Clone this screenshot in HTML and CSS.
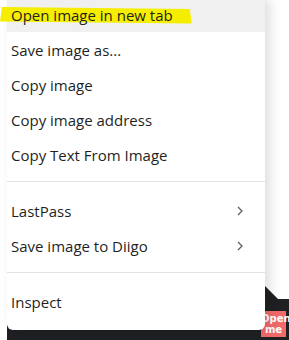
FILE: index.html
```html
<!DOCTYPE html>
<html lang="en">
<head>
    <meta charset="UTF-8">
    <meta name="viewport" content="width=device-width, initial-scale=1.0">
    <title>Context menu</title>
    <link rel="stylesheet" href="styles.css">
</head>
<body>
    <div class="page">
        <div class="page-body"></div>
        <div class="dock">
            <span class="badge">Open<br>me</span>
        </div>
    </div>

    <ul class="context-menu">
        <li class="menu-item is-hover"><span class="marker">Open image in new tab</span></li>
        <li class="menu-item">Save image as...</li>
        <li class="menu-item">Copy image</li>
        <li class="menu-item">Copy image address</li>
        <li class="menu-item">Copy Text From Image</li>
        <li class="menu-sep"></li>
        <li class="menu-item">LastPass
            <svg class="chevron" width="8" height="12" viewBox="0 0 8 12"><polyline points="2,2 6,6 2,10" /></svg>
        </li>
        <li class="menu-item">Save image to Diigo
            <svg class="chevron" width="8" height="12" viewBox="0 0 8 12"><polyline points="2,2 6,6 2,10" /></svg>
        </li>
        <li class="menu-sep"></li>
        <li class="menu-item">Inspect</li>
    </ul>
</body>
</html>
```

FILE: styles.css
```css
/* --- page behind the menu --- */
body {
    margin: 0;
    height: 340px;
    overflow: hidden;
    background: #fff;
    font-family: "Open Sans", "Noto Sans", Arial, sans-serif;
    color: #1f1f1f;
    display: flex;
    flex-direction: column;
}

.page {
    flex: 1;
    display: flex;
    flex-direction: column;
    padding-left: 7px;
}

.page-body {
    flex: 1;
}

.dock {
    position: relative;
    height: 41px;
    box-sizing: border-box;
    background: #1f2023;
    display: flex;
    justify-content: flex-end;
    align-items: flex-start;
    padding: 12px 3px 0 0;
}
.dock::before {
    content: "";
    position: absolute;
    left: 258px;
    top: -13px;
    width: 13px;
    height: 13px;
    background: #1f2023;
    clip-path: polygon(0 0, 0 100%, 100% 100%);
}

.badge {
    width: 25px;
    height: 26px;
    background: #f26a6a;
    color: #fff;
    font-family: "DejaVu Sans", Arial, sans-serif;
    font-weight: bold;
    font-size: 10px;
    line-height: 11px;
    text-align: center;
    padding-top: 2px;
    box-sizing: border-box;
}

/* --- context menu --- */
.context-menu {
    position: absolute;
    top: -3px;
    left: 7px;
    width: 258px;
    margin: 0;
    padding: 0 0 11px;
    list-style: none;
    background: #fff;
    border-radius: 0 0 6px 6px;
    box-shadow: 5px 2px 12px rgba(0, 0, 0, 0.13);
    font-size: 15px;
}

.menu-item {
    height: 35px;
    display: flex;
    align-items: center;
    justify-content: space-between;
    padding: 0 21px 0 4px;
}
.menu-item.is-hover {
    background: #f0f0f0;
}

.menu-sep {
    height: 1px;
    background: #e3e3e3;
    margin: 9px 0 11px;
}

.chevron polyline {
    fill: none;
    stroke: #5f5f5f;
    stroke-width: 1.3;
}

/* yellow highlighter stroke */
.marker {
    position: relative;
    z-index: 0;
}
.marker::before {
    content: "";
    position: absolute;
    left: -11px;
    right: -19px;
    top: 1px;
    bottom: -1px;
    z-index: -1;
    background: #f5ee00;
    clip-path: polygon(1% 8%, 99% 18%, 100% 90%, 0 80%);
    border-radius: 3px;
}
```
